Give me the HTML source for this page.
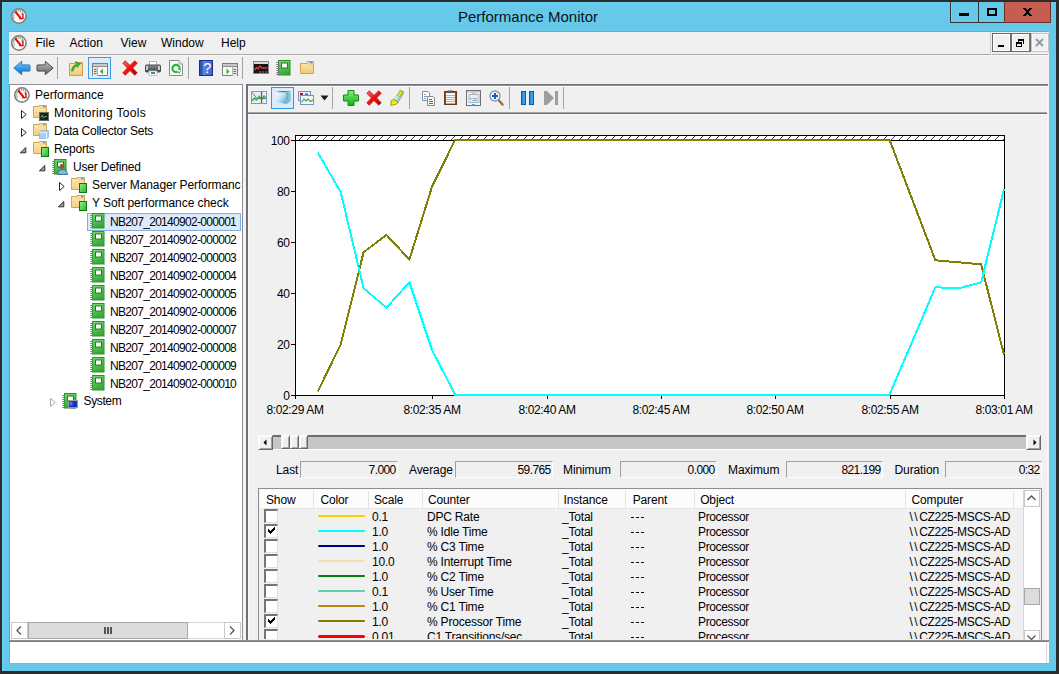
<!DOCTYPE html><html><head><meta charset="utf-8"><style>
html,body{margin:0;padding:0;}
body{width:1059px;height:674px;position:relative;overflow:hidden;background:#2d2b2b;font-family:"Liberation Sans", sans-serif;color:#000;}
div,svg{box-sizing:border-box;}
</style></head><body>
<div style="position:absolute;left:2px;top:2px;width:1054px;height:669px;background:#66c9e9;border-top:1px solid #66d3f6;border-left:1px solid #66d3f6;"></div>
<svg style="position:absolute;left:11px;top:8px;" width="16" height="16" viewBox="0 0 16 16"><circle cx="7.9" cy="8" r="7.2" fill="#fbfbfb" stroke="#7e7e7e" stroke-width="1.5"/>
<path d="M3.3 10.3 A5 5 0 0 1 12.2 5.2" fill="none" stroke="#5f8f72" stroke-width="1.6" stroke-dasharray="1 1"/>
<path d="M4.2 3.4 L9.6 10.2" stroke="#f00000" stroke-width="2"/>
<path d="M10.6 6.1 H11.9 V10.6 H8.2" fill="none" stroke="#e00000" stroke-width="1.4"/></svg>
<div style="position:absolute;left:458px;top:9.30px;font-size:15px;line-height:15px;white-space:pre;color:#0a1418;">Performance Monitor</div>
<div style="position:absolute;left:950px;top:2px;width:29px;height:21px;background:#66c9e9;border:1px solid #3a3434;border-top:none;"></div>
<div style="position:absolute;left:951px;top:2px;width:1px;height:20px;background:#6ad6f8;"></div>
<div style="position:absolute;left:959px;top:13px;width:10px;height:3px;background:#000;"></div>
<div style="position:absolute;left:978px;top:2px;width:27px;height:21px;background:#66c9e9;border:1px solid #3a3434;border-top:none;"></div>
<div style="position:absolute;left:987px;top:8px;width:10px;height:8px;border:2px solid #000;"></div>
<div style="position:absolute;left:1004px;top:2px;width:47px;height:21px;background:#c75c50;border:1px solid #6b2e2a;border-top:none;"></div>
<svg style="position:absolute;left:1023px;top:8px;" width="9" height="8" viewBox="0 0 9 8"><g fill="#000" shape-rendering="crispEdges"><rect x="0" y="0" width="3" height="1"/><rect x="6" y="0" width="3" height="1"/><rect x="1" y="1" width="3" height="1"/><rect x="5" y="1" width="3" height="1"/><rect x="2" y="2" width="5" height="1"/><rect x="3" y="3" width="3" height="1"/><rect x="3" y="4" width="3" height="1"/><rect x="2" y="5" width="5" height="1"/><rect x="1" y="6" width="3" height="1"/><rect x="5" y="6" width="3" height="1"/><rect x="0" y="7" width="3" height="1"/><rect x="6" y="7" width="3" height="1"/></g></svg>
<div style="position:absolute;left:9px;top:31px;width:1040px;height:633px;background:#f0f0f0;"></div>
<div style="position:absolute;left:9px;top:31px;width:1040px;height:1px;background:#5cb4d4;"></div>
<div style="position:absolute;left:9px;top:32px;width:981px;height:1px;background:#f6f3f3;"></div>
<svg style="position:absolute;left:11px;top:35px;" width="16" height="16" viewBox="0 0 16 16"><circle cx="7.9" cy="8" r="7.2" fill="#fbfbfb" stroke="#7e7e7e" stroke-width="1.5"/>
<path d="M3.3 10.3 A5 5 0 0 1 12.2 5.2" fill="none" stroke="#5f8f72" stroke-width="1.6" stroke-dasharray="1 1"/>
<path d="M4.2 3.4 L9.6 10.2" stroke="#f00000" stroke-width="2"/>
<path d="M10.6 6.1 H11.9 V10.6 H8.2" fill="none" stroke="#e00000" stroke-width="1.4"/></svg>
<div style="position:absolute;left:35.5px;top:36.84px;font-size:12px;line-height:12px;white-space:pre;">File</div>
<div style="position:absolute;left:69.5px;top:36.84px;font-size:12px;line-height:12px;white-space:pre;">Action</div>
<div style="position:absolute;left:120.5px;top:36.84px;font-size:12px;line-height:12px;white-space:pre;">View</div>
<div style="position:absolute;left:161px;top:36.84px;font-size:12px;line-height:12px;white-space:pre;">Window</div>
<div style="position:absolute;left:221px;top:36.84px;font-size:12px;line-height:12px;white-space:pre;">Help</div>
<div style="position:absolute;left:9px;top:54px;width:981px;height:1px;background:#a9a9a9;"></div>
<div style="position:absolute;left:9px;top:55px;width:1040px;height:1px;background:#f9f9fb;"></div>
<div style="position:absolute;left:990px;top:32px;width:1px;height:23px;background:#d0d0d0;"></div>
<div style="position:absolute;left:992px;top:33px;width:19px;height:19px;background:#f0f0f0;border:1px solid #6a6a6a;box-shadow:inset 0 0 0 1px #fff;"></div>
<div style="position:absolute;left:998px;top:45px;width:6px;height:2px;background:#000;"></div>
<div style="position:absolute;left:1011px;top:33px;width:20px;height:19px;background:#f0f0f0;border:1px solid #6a6a6a;box-shadow:inset 0 0 0 1px #fff;"></div>
<div style="position:absolute;left:1029px;top:34px;width:1px;height:17px;background:#7a7a7a;"></div>
<svg style="position:absolute;left:1016px;top:38px;" width="9" height="10" viewBox="0 0 9 10"><g fill="#000" shape-rendering="crispEdges"><rect x="2" y="1" width="6" height="2"/><rect x="7" y="3" width="1" height="3"/><rect x="2" y="3" width="1" height="1"/><rect x="0" y="4" width="6" height="2"/><rect x="0" y="6" width="1" height="3"/><rect x="5" y="6" width="1" height="3"/><rect x="0" y="8" width="6" height="1"/></g></svg>
<div style="position:absolute;left:1031px;top:33px;width:18px;height:19px;background:#f0f0f0;border:1px solid #c4c4c4;box-shadow:inset 0 0 0 1px #fafafa;"></div>
<svg style="position:absolute;left:1035px;top:38px;" width="9" height="9" viewBox="0 0 9 9"><path d="M1 1 L8 8 M8 1 L1 8" stroke="#8a9aae" stroke-width="1.8"/></svg>
<div style="position:absolute;left:992px;top:54px;width:56px;height:1px;background:#b0b0b0;"></div>
<svg style="position:absolute;left:13px;top:60px;" width="18" height="16" viewBox="0 0 18 16"><defs><linearGradient id="gb" x1="0" y1="0" x2="0" y2="1"><stop offset="0" stop-color="#7fd4fc"/><stop offset="0.55" stop-color="#2c98e8"/><stop offset="1" stop-color="#0e64c0"/></linearGradient></defs><path d="M0.8 8 L8.7 1.3 V4.9 H16.2 Q17 4.9 17 5.8 V10.2 Q17 11.1 16.2 11.1 H8.7 V14.7 Z" fill="url(#gb)" stroke="#2a7ac4" stroke-width="1" stroke-linejoin="round"/></svg>
<svg style="position:absolute;left:36px;top:60px;" width="18" height="16" viewBox="0 0 18 16"><defs><linearGradient id="gg" x1="0" y1="0" x2="0" y2="1"><stop offset="0" stop-color="#c4c4c4"/><stop offset="0.55" stop-color="#8a8a8a"/><stop offset="1" stop-color="#5e5e5e"/></linearGradient></defs><path d="M17.2 8 L9.3 1.3 V4.9 H1.8 Q1 4.9 1 5.8 V10.2 Q1 11.1 1.8 11.1 H9.3 V14.7 Z" fill="url(#gg)" stroke="#4e4e4e" stroke-width="1" stroke-linejoin="round"/></svg>
<div style="position:absolute;left:57px;top:57px;width:1px;height:22px;background:#a4a4a4;"></div>
<svg style="position:absolute;left:68px;top:60px;" width="16" height="17" viewBox="0 0 16 17"><defs><linearGradient id="gf" x1="0" y1="0" x2="0" y2="1"><stop offset="0" stop-color="#fde8b0"/><stop offset="1" stop-color="#eecb76"/></linearGradient></defs><path d="M1.5 3.5 H7 V2.5 H14.5 V15.5 H1.5 Z" fill="url(#gf)" stroke="#c9a050" stroke-width="1"/><rect x="11" y="3" width="2.6" height="1.2" fill="#4a90e0"/><path d="M3.5 11 Q4 5.5 8.5 4 L7.5 1.5 L12 3.8 L9.5 7.6 L9 5.6 Q6 7 5 11 Z" fill="#36c036" stroke="#1a9a1a" stroke-width="0.7"/></svg>
<div style="position:absolute;left:88px;top:57px;width:23px;height:22px;background:#dcecfc;border:1px solid #3a9ee4;"></div>
<svg style="position:absolute;left:92px;top:63px;" width="16" height="13" viewBox="0 0 16 13"><rect x="0.5" y="0.5" width="15" height="12" fill="#fafafa" stroke="#7e7e7e"/><rect x="1" y="1" width="14" height="2" fill="#c8c8c8"/><path d="M1 3.5 H15" stroke="#8e8e8e" stroke-width="1"/><path d="M5.5 4 V13" stroke="#8e8e8e" stroke-width="1"/><rect x="1" y="4" width="4.5" height="9" fill="#e4e4e4"/><path d="M2 6.5h2.5M2 8.5h2.5M2 10.5h2.5" stroke="#3a78c0" stroke-width="1.2"/><path d="M11 5.5 V11.5 L8 8.5 Z" fill="#38b038"/></svg>
<svg style="position:absolute;left:122px;top:60px;" width="16" height="16" viewBox="0 0 16 16"><defs><linearGradient id="g1" x1="0" y1="0" x2="1" y2="1"><stop offset="0" stop-color="#ff6a6a"/><stop offset="0.5" stop-color="#f01010"/><stop offset="1" stop-color="#b00000"/></linearGradient></defs>
<path d="M0.8 3.2 L3.2 0.8 L8 5.4 L12.8 0.8 L15.2 3.2 L10.6 8 L15.2 12.8 L12.8 15.2 L8 10.6 L3.2 15.2 L0.8 12.8 L5.4 8 Z" fill="url(#g1)" stroke="#c41414" stroke-width="0.8" stroke-linejoin="round"/></svg>
<svg style="position:absolute;left:145px;top:60px;" width="16" height="16" viewBox="0 0 16 16"><rect x="4.5" y="1.5" width="7" height="4" fill="#fff" stroke="#b4b4b4"/><defs><linearGradient id="gpr" x1="0" y1="0" x2="0" y2="1"><stop offset="0" stop-color="#8a8e92"/><stop offset="1" stop-color="#3c4044"/></linearGradient></defs><rect x="0.5" y="5" width="15" height="7" rx="1" fill="url(#gpr)" stroke="#4a4e52"/><rect x="1" y="6" width="2" height="4" fill="#c8ccd0"/><rect x="13" y="6" width="2" height="4" fill="#c8ccd0"/><rect x="4" y="11" width="8" height="4.5" fill="#fff" stroke="#a8b8c8" stroke-width="0.8"/><rect x="6" y="12" width="4" height="2" fill="#2a8ae0"/><rect x="8" y="12" width="2" height="2" fill="#30a040"/></svg>
<svg style="position:absolute;left:169px;top:60px;" width="15" height="16" viewBox="0 0 15 16"><path d="M0.5 0.5 H10 L13.5 4 V15.5 H0.5 Z" fill="#fafafa" stroke="#8a8a8a"/><path d="M10 0.5 V4 H13.5" fill="#e8e8e8" stroke="#a0a0a0" stroke-width="0.8"/><circle cx="7" cy="8.5" r="3.6" fill="none" stroke="#2cb82c" stroke-width="2.2"/><path d="M7.5 10 L12 9.5 L10.5 14 Z" fill="#2cb82c"/><rect x="8" y="10" width="3" height="1.5" fill="#fafafa"/></svg>
<div style="position:absolute;left:188px;top:57px;width:1px;height:22px;background:#a4a4a4;"></div>
<svg style="position:absolute;left:199px;top:60px;" width="15" height="16" viewBox="0 0 15 16"><defs><linearGradient id="gh" x1="0" y1="0" x2="1" y2="0"><stop offset="0" stop-color="#2a48a8"/><stop offset="0.25" stop-color="#3a60c8"/><stop offset="0.3" stop-color="#5a86e0"/><stop offset="1" stop-color="#3a66d0"/></linearGradient></defs><rect x="0.5" y="0.5" width="13" height="15" fill="url(#gh)" stroke="#1c3088"/><text x="8.2" y="13.2" font-family="Liberation Sans" font-size="14.5" fill="#fff" text-anchor="middle">?</text></svg>
<svg style="position:absolute;left:222px;top:63px;" width="16" height="13" viewBox="0 0 16 13"><rect x="0.5" y="0.5" width="15" height="12" fill="#fafafa" stroke="#7e7e7e"/><rect x="1" y="1" width="14" height="2" fill="#c8c8c8"/><path d="M1 3.5 H15" stroke="#8e8e8e" stroke-width="1"/><path d="M10.5 4 V13" stroke="#8e8e8e" stroke-width="1"/><rect x="10.5" y="4" width="4.5" height="9" fill="#e4e4e4"/><path d="M11.5 6.5h2.5M11.5 8.5h2.5M11.5 10.5h2.5" stroke="#3a78c0" stroke-width="1.2"/><path d="M4.5 5.5 V11.5 L7.5 8.5 Z" fill="#38b038"/></svg>
<div style="position:absolute;left:242px;top:57px;width:1px;height:22px;background:#a4a4a4;"></div>
<svg style="position:absolute;left:253px;top:61px;" width="16" height="13" viewBox="0 0 16 13"><rect x="0.5" y="0.5" width="15" height="12" fill="#141414" stroke="#8a8a8a"/><rect x="1" y="1" width="14" height="2" fill="#d8d8d8"/><path d="M1.5 9 L3.5 6.5 L5 8 L7 5 L9 7 H14.5" fill="none" stroke="#e83838" stroke-width="1.4"/><path d="M6 11h2M9 11h2M12 11h2" stroke="#9a9a9a" stroke-width="0.9"/></svg>
<svg style="position:absolute;left:276px;top:60px;" width="16" height="16" viewBox="0 0 16 16"><defs><linearGradient id="g2" x1="0" y1="0" x2="0.3" y2="1"><stop offset="0" stop-color="#78dc78"/><stop offset="1" stop-color="#38a838"/></linearGradient></defs>
<rect x="2.5" y="0.5" width="11.5" height="14.5" fill="url(#g2)" stroke="#2e902e" stroke-width="1"/>
<path d="M0.3 2.5h3M0.3 4.5h3M0.3 6.5h3M0.3 8.5h3M0.3 10.5h3M0.3 12.5h3M0.3 14.5h3" stroke="#7a7a7a" stroke-width="1.1"/>
<rect x="5.5" y="3" width="6" height="5" fill="#fff" stroke="#1e7e1e" stroke-width="1"/></svg>
<svg style="position:absolute;left:299px;top:60px;" width="16" height="15" viewBox="0 0 16 15"><defs><linearGradient id="gyf" x1="0" y1="0" x2="0" y2="1"><stop offset="0" stop-color="#fdeab8"/><stop offset="1" stop-color="#f0ca72"/></linearGradient></defs><path d="M1.5 3.5 H8 V1.5 H14.5 V13.5 H1.5 Z" fill="url(#gyf)" stroke="#cfa24e" stroke-width="1"/><path d="M8 4 H14" stroke="#e4c070" stroke-width="0.8"/><rect x="10.5" y="2" width="3" height="1.2" fill="#4a90e0"/></svg>
<div style="position:absolute;left:9px;top:84px;width:234px;height:557px;background:#fff;border:1px solid #8c9096;"></div>
<div style="position:absolute;left:87px;top:213px;width:154px;height:18px;background:#dcebfc;border:1px solid #84acdd;"></div>
<svg style="position:absolute;left:14px;top:87px;" width="16" height="16" viewBox="0 0 16 16"><circle cx="7.9" cy="8" r="7.2" fill="#fbfbfb" stroke="#7e7e7e" stroke-width="1.5"/>
<path d="M3.3 10.3 A5 5 0 0 1 12.2 5.2" fill="none" stroke="#5f8f72" stroke-width="1.6" stroke-dasharray="1 1"/>
<path d="M4.2 3.4 L9.6 10.2" stroke="#f00000" stroke-width="2"/>
<path d="M10.6 6.1 H11.9 V10.6 H8.2" fill="none" stroke="#e00000" stroke-width="1.4"/></svg>
<div style="position:absolute;left:35px;top:86.84px;font-size:12px;line-height:16px;height:18px;white-space:pre;width:206px;overflow:hidden;">Performance</div>
<svg style="position:absolute;left:21px;top:110px;" width="6" height="9" viewBox="0 0 6 9"><path d="M0.5 0.5 L5.2 4.5 L0.5 8.5 Z" fill="#fff" stroke="#262626" stroke-width="1"/></svg>
<svg style="position:absolute;left:33px;top:105px;" width="16" height="16" viewBox="0 0 16 16"><defs><linearGradient id="g3" x1="0" y1="0" x2="0" y2="1"><stop offset="0" stop-color="#fdeab8"/><stop offset="1" stop-color="#f2cf7c"/></linearGradient></defs>
<path d="M0.5 1.5 H6.2 V0.5 H13.5 V12.5 H0.5 Z" fill="url(#g3)" stroke="#d2a650" stroke-width="1"/>
<path d="M6.5 3 H13" stroke="#e8c678" stroke-width="0.8"/>
<rect x="10" y="1.1" width="2.6" height="1.2" fill="#4a90e0"/><rect x="6.5" y="7.5" width="9" height="8" fill="#202020" stroke="#6a6a6a" stroke-width="1"/><path d="M8 12.5 l1.3 -2.5 l1.3 3 l1.3 -1.5 h1.8" fill="none" stroke="#30d040" stroke-width="1"/></svg>
<div style="position:absolute;left:54px;top:104.84px;font-size:12px;line-height:16px;height:18px;white-space:pre;letter-spacing:0.3px;width:187px;overflow:hidden;">Monitoring Tools</div>
<svg style="position:absolute;left:21px;top:128px;" width="6" height="9" viewBox="0 0 6 9"><path d="M0.5 0.5 L5.2 4.5 L0.5 8.5 Z" fill="#fff" stroke="#262626" stroke-width="1"/></svg>
<svg style="position:absolute;left:33px;top:123px;" width="16" height="16" viewBox="0 0 16 16"><defs><linearGradient id="g4" x1="0" y1="0" x2="0" y2="1"><stop offset="0" stop-color="#fdeab8"/><stop offset="1" stop-color="#f2cf7c"/></linearGradient></defs>
<path d="M0.5 1.5 H6.2 V0.5 H13.5 V12.5 H0.5 Z" fill="url(#g4)" stroke="#d2a650" stroke-width="1"/>
<path d="M6.5 3 H13" stroke="#e8c678" stroke-width="0.8"/>
<rect x="10" y="1.1" width="2.6" height="1.2" fill="#4a90e0"/><path d="M6 9.5 L8.5 7.5 H15.8 V13.8 L13.5 16 H6.5 Z" fill="#a8d0ea" stroke="#7ab0d4" stroke-width="0.7"/><path d="M6.2 9.6 H13.5 V16" fill="none" stroke="#e6f4fc" stroke-width="0.9"/><path d="M13.5 9.6 L15.8 7.5" stroke="#d0e8f8" stroke-width="0.7"/></svg>
<div style="position:absolute;left:54px;top:122.84px;font-size:12px;line-height:16px;height:18px;white-space:pre;letter-spacing:-0.23px;width:187px;overflow:hidden;">Data Collector Sets</div>
<svg style="position:absolute;left:20px;top:147px;" width="7" height="7" viewBox="0 0 7 7"><path d="M5.8 0.5 V5.8 H0.4 Z" fill="#a0a0a0" stroke="#303030" stroke-width="1" stroke-linejoin="round"/></svg>
<svg style="position:absolute;left:33px;top:141px;" width="16" height="16" viewBox="0 0 16 16"><defs><linearGradient id="g5" x1="0" y1="0" x2="0" y2="1"><stop offset="0" stop-color="#fdeab8"/><stop offset="1" stop-color="#f2cf7c"/></linearGradient></defs>
<path d="M0.5 1.5 H6.2 V0.5 H13.5 V12.5 H0.5 Z" fill="url(#g5)" stroke="#d2a650" stroke-width="1"/>
<path d="M6.5 3 H13" stroke="#e8c678" stroke-width="0.8"/>
<rect x="10" y="1.1" width="2.6" height="1.2" fill="#4a90e0"/><defs><linearGradient id="g5b" x1="0" y1="0" x2="1" y2="1"><stop offset="0" stop-color="#8ef08e"/><stop offset="1" stop-color="#2cb42c"/></linearGradient></defs><rect x="8.5" y="6.5" width="7" height="9" fill="url(#g5b)" stroke="#0e780e" stroke-width="1"/></svg>
<div style="position:absolute;left:54px;top:140.84px;font-size:12px;line-height:16px;height:18px;white-space:pre;letter-spacing:-0.2px;width:187px;overflow:hidden;">Reports</div>
<svg style="position:absolute;left:39px;top:165px;" width="7" height="7" viewBox="0 0 7 7"><path d="M5.8 0.5 V5.8 H0.4 Z" fill="#a0a0a0" stroke="#303030" stroke-width="1" stroke-linejoin="round"/></svg>
<svg style="position:absolute;left:52px;top:159px;" width="16" height="16" viewBox="0 0 16 16"><defs><linearGradient id="g6" x1="0" y1="0" x2="0.3" y2="1"><stop offset="0" stop-color="#78dc78"/><stop offset="1" stop-color="#38a838"/></linearGradient></defs>
<rect x="2.5" y="0.5" width="11.5" height="14.5" fill="url(#g6)" stroke="#2e902e" stroke-width="1"/>
<path d="M0.3 2.5h3M0.3 4.5h3M0.3 6.5h3M0.3 8.5h3M0.3 10.5h3M0.3 12.5h3M0.3 14.5h3" stroke="#7a7a7a" stroke-width="1.1"/>
<rect x="5.5" y="3" width="6" height="5" fill="#fff" stroke="#1e7e1e" stroke-width="1"/><circle cx="10" cy="7.5" r="2.4" fill="#8a5a36"/><path d="M5.5 15.5 Q6 10.5 10.5 10.5 Q15 10.5 15.5 15.5 Z" fill="#80b8e0" stroke="#2e5e86" stroke-width="0.8"/></svg>
<div style="position:absolute;left:73px;top:158.84px;font-size:12px;line-height:16px;height:18px;white-space:pre;letter-spacing:-0.2px;width:168px;overflow:hidden;">User Defined</div>
<svg style="position:absolute;left:59px;top:182px;" width="6" height="9" viewBox="0 0 6 9"><path d="M0.5 0.5 L5.2 4.5 L0.5 8.5 Z" fill="#fff" stroke="#262626" stroke-width="1"/></svg>
<svg style="position:absolute;left:71px;top:177px;" width="16" height="16" viewBox="0 0 16 16"><defs><linearGradient id="g7" x1="0" y1="0" x2="0" y2="1"><stop offset="0" stop-color="#fdeab8"/><stop offset="1" stop-color="#f2cf7c"/></linearGradient></defs>
<path d="M0.5 1.5 H6.2 V0.5 H13.5 V12.5 H0.5 Z" fill="url(#g7)" stroke="#d2a650" stroke-width="1"/>
<path d="M6.5 3 H13" stroke="#e8c678" stroke-width="0.8"/>
<rect x="10" y="1.1" width="2.6" height="1.2" fill="#4a90e0"/><defs><linearGradient id="g7b" x1="0" y1="0" x2="1" y2="1"><stop offset="0" stop-color="#8ef08e"/><stop offset="1" stop-color="#2cb42c"/></linearGradient></defs><rect x="8.5" y="6.5" width="7" height="9" fill="url(#g7b)" stroke="#0e780e" stroke-width="1"/></svg>
<div style="position:absolute;left:92px;top:176.84px;font-size:12px;line-height:16px;height:18px;white-space:pre;letter-spacing:-0.12px;width:149px;overflow:hidden;">Server Manager Performance Monitor</div>
<svg style="position:absolute;left:58px;top:201px;" width="7" height="7" viewBox="0 0 7 7"><path d="M5.8 0.5 V5.8 H0.4 Z" fill="#a0a0a0" stroke="#303030" stroke-width="1" stroke-linejoin="round"/></svg>
<svg style="position:absolute;left:71px;top:195px;" width="16" height="16" viewBox="0 0 16 16"><defs><linearGradient id="g8" x1="0" y1="0" x2="0" y2="1"><stop offset="0" stop-color="#fdeab8"/><stop offset="1" stop-color="#f2cf7c"/></linearGradient></defs>
<path d="M0.5 1.5 H6.2 V0.5 H13.5 V12.5 H0.5 Z" fill="url(#g8)" stroke="#d2a650" stroke-width="1"/>
<path d="M6.5 3 H13" stroke="#e8c678" stroke-width="0.8"/>
<rect x="10" y="1.1" width="2.6" height="1.2" fill="#4a90e0"/><defs><linearGradient id="g8b" x1="0" y1="0" x2="1" y2="1"><stop offset="0" stop-color="#8ef08e"/><stop offset="1" stop-color="#2cb42c"/></linearGradient></defs><rect x="8.5" y="6.5" width="7" height="9" fill="url(#g8b)" stroke="#0e780e" stroke-width="1"/></svg>
<div style="position:absolute;left:92px;top:194.84px;font-size:12px;line-height:16px;height:18px;white-space:pre;letter-spacing:-0.05px;width:149px;overflow:hidden;">Y Soft performance check</div>
<svg style="position:absolute;left:90px;top:213px;" width="16" height="16" viewBox="0 0 16 16"><defs><linearGradient id="g9" x1="0" y1="0" x2="0.3" y2="1"><stop offset="0" stop-color="#78dc78"/><stop offset="1" stop-color="#38a838"/></linearGradient></defs>
<rect x="2.5" y="0.5" width="11.5" height="14.5" fill="url(#g9)" stroke="#2e902e" stroke-width="1"/>
<path d="M0.3 2.5h3M0.3 4.5h3M0.3 6.5h3M0.3 8.5h3M0.3 10.5h3M0.3 12.5h3M0.3 14.5h3" stroke="#7a7a7a" stroke-width="1.1"/>
<rect x="5.5" y="3" width="6" height="5" fill="#fff" stroke="#1e7e1e" stroke-width="1"/></svg>
<div style="position:absolute;left:110px;top:213.84px;font-size:12px;line-height:16px;height:18px;white-space:pre;letter-spacing:-0.7px;width:131px;overflow:hidden;">NB207_20140902-000001</div>
<svg style="position:absolute;left:90px;top:231px;" width="16" height="16" viewBox="0 0 16 16"><defs><linearGradient id="g10" x1="0" y1="0" x2="0.3" y2="1"><stop offset="0" stop-color="#78dc78"/><stop offset="1" stop-color="#38a838"/></linearGradient></defs>
<rect x="2.5" y="0.5" width="11.5" height="14.5" fill="url(#g10)" stroke="#2e902e" stroke-width="1"/>
<path d="M0.3 2.5h3M0.3 4.5h3M0.3 6.5h3M0.3 8.5h3M0.3 10.5h3M0.3 12.5h3M0.3 14.5h3" stroke="#7a7a7a" stroke-width="1.1"/>
<rect x="5.5" y="3" width="6" height="5" fill="#fff" stroke="#1e7e1e" stroke-width="1"/></svg>
<div style="position:absolute;left:110px;top:231.84px;font-size:12px;line-height:16px;height:18px;white-space:pre;letter-spacing:-0.7px;width:131px;overflow:hidden;">NB207_20140902-000002</div>
<svg style="position:absolute;left:90px;top:249px;" width="16" height="16" viewBox="0 0 16 16"><defs><linearGradient id="g11" x1="0" y1="0" x2="0.3" y2="1"><stop offset="0" stop-color="#78dc78"/><stop offset="1" stop-color="#38a838"/></linearGradient></defs>
<rect x="2.5" y="0.5" width="11.5" height="14.5" fill="url(#g11)" stroke="#2e902e" stroke-width="1"/>
<path d="M0.3 2.5h3M0.3 4.5h3M0.3 6.5h3M0.3 8.5h3M0.3 10.5h3M0.3 12.5h3M0.3 14.5h3" stroke="#7a7a7a" stroke-width="1.1"/>
<rect x="5.5" y="3" width="6" height="5" fill="#fff" stroke="#1e7e1e" stroke-width="1"/></svg>
<div style="position:absolute;left:110px;top:249.84px;font-size:12px;line-height:16px;height:18px;white-space:pre;letter-spacing:-0.7px;width:131px;overflow:hidden;">NB207_20140902-000003</div>
<svg style="position:absolute;left:90px;top:267px;" width="16" height="16" viewBox="0 0 16 16"><defs><linearGradient id="g12" x1="0" y1="0" x2="0.3" y2="1"><stop offset="0" stop-color="#78dc78"/><stop offset="1" stop-color="#38a838"/></linearGradient></defs>
<rect x="2.5" y="0.5" width="11.5" height="14.5" fill="url(#g12)" stroke="#2e902e" stroke-width="1"/>
<path d="M0.3 2.5h3M0.3 4.5h3M0.3 6.5h3M0.3 8.5h3M0.3 10.5h3M0.3 12.5h3M0.3 14.5h3" stroke="#7a7a7a" stroke-width="1.1"/>
<rect x="5.5" y="3" width="6" height="5" fill="#fff" stroke="#1e7e1e" stroke-width="1"/></svg>
<div style="position:absolute;left:110px;top:267.84px;font-size:12px;line-height:16px;height:18px;white-space:pre;letter-spacing:-0.7px;width:131px;overflow:hidden;">NB207_20140902-000004</div>
<svg style="position:absolute;left:90px;top:285px;" width="16" height="16" viewBox="0 0 16 16"><defs><linearGradient id="g13" x1="0" y1="0" x2="0.3" y2="1"><stop offset="0" stop-color="#78dc78"/><stop offset="1" stop-color="#38a838"/></linearGradient></defs>
<rect x="2.5" y="0.5" width="11.5" height="14.5" fill="url(#g13)" stroke="#2e902e" stroke-width="1"/>
<path d="M0.3 2.5h3M0.3 4.5h3M0.3 6.5h3M0.3 8.5h3M0.3 10.5h3M0.3 12.5h3M0.3 14.5h3" stroke="#7a7a7a" stroke-width="1.1"/>
<rect x="5.5" y="3" width="6" height="5" fill="#fff" stroke="#1e7e1e" stroke-width="1"/></svg>
<div style="position:absolute;left:110px;top:285.84px;font-size:12px;line-height:16px;height:18px;white-space:pre;letter-spacing:-0.7px;width:131px;overflow:hidden;">NB207_20140902-000005</div>
<svg style="position:absolute;left:90px;top:303px;" width="16" height="16" viewBox="0 0 16 16"><defs><linearGradient id="g14" x1="0" y1="0" x2="0.3" y2="1"><stop offset="0" stop-color="#78dc78"/><stop offset="1" stop-color="#38a838"/></linearGradient></defs>
<rect x="2.5" y="0.5" width="11.5" height="14.5" fill="url(#g14)" stroke="#2e902e" stroke-width="1"/>
<path d="M0.3 2.5h3M0.3 4.5h3M0.3 6.5h3M0.3 8.5h3M0.3 10.5h3M0.3 12.5h3M0.3 14.5h3" stroke="#7a7a7a" stroke-width="1.1"/>
<rect x="5.5" y="3" width="6" height="5" fill="#fff" stroke="#1e7e1e" stroke-width="1"/></svg>
<div style="position:absolute;left:110px;top:303.84px;font-size:12px;line-height:16px;height:18px;white-space:pre;letter-spacing:-0.7px;width:131px;overflow:hidden;">NB207_20140902-000006</div>
<svg style="position:absolute;left:90px;top:321px;" width="16" height="16" viewBox="0 0 16 16"><defs><linearGradient id="g15" x1="0" y1="0" x2="0.3" y2="1"><stop offset="0" stop-color="#78dc78"/><stop offset="1" stop-color="#38a838"/></linearGradient></defs>
<rect x="2.5" y="0.5" width="11.5" height="14.5" fill="url(#g15)" stroke="#2e902e" stroke-width="1"/>
<path d="M0.3 2.5h3M0.3 4.5h3M0.3 6.5h3M0.3 8.5h3M0.3 10.5h3M0.3 12.5h3M0.3 14.5h3" stroke="#7a7a7a" stroke-width="1.1"/>
<rect x="5.5" y="3" width="6" height="5" fill="#fff" stroke="#1e7e1e" stroke-width="1"/></svg>
<div style="position:absolute;left:110px;top:321.84px;font-size:12px;line-height:16px;height:18px;white-space:pre;letter-spacing:-0.7px;width:131px;overflow:hidden;">NB207_20140902-000007</div>
<svg style="position:absolute;left:90px;top:339px;" width="16" height="16" viewBox="0 0 16 16"><defs><linearGradient id="g16" x1="0" y1="0" x2="0.3" y2="1"><stop offset="0" stop-color="#78dc78"/><stop offset="1" stop-color="#38a838"/></linearGradient></defs>
<rect x="2.5" y="0.5" width="11.5" height="14.5" fill="url(#g16)" stroke="#2e902e" stroke-width="1"/>
<path d="M0.3 2.5h3M0.3 4.5h3M0.3 6.5h3M0.3 8.5h3M0.3 10.5h3M0.3 12.5h3M0.3 14.5h3" stroke="#7a7a7a" stroke-width="1.1"/>
<rect x="5.5" y="3" width="6" height="5" fill="#fff" stroke="#1e7e1e" stroke-width="1"/></svg>
<div style="position:absolute;left:110px;top:339.84px;font-size:12px;line-height:16px;height:18px;white-space:pre;letter-spacing:-0.7px;width:131px;overflow:hidden;">NB207_20140902-000008</div>
<svg style="position:absolute;left:90px;top:357px;" width="16" height="16" viewBox="0 0 16 16"><defs><linearGradient id="g17" x1="0" y1="0" x2="0.3" y2="1"><stop offset="0" stop-color="#78dc78"/><stop offset="1" stop-color="#38a838"/></linearGradient></defs>
<rect x="2.5" y="0.5" width="11.5" height="14.5" fill="url(#g17)" stroke="#2e902e" stroke-width="1"/>
<path d="M0.3 2.5h3M0.3 4.5h3M0.3 6.5h3M0.3 8.5h3M0.3 10.5h3M0.3 12.5h3M0.3 14.5h3" stroke="#7a7a7a" stroke-width="1.1"/>
<rect x="5.5" y="3" width="6" height="5" fill="#fff" stroke="#1e7e1e" stroke-width="1"/></svg>
<div style="position:absolute;left:110px;top:357.84px;font-size:12px;line-height:16px;height:18px;white-space:pre;letter-spacing:-0.7px;width:131px;overflow:hidden;">NB207_20140902-000009</div>
<svg style="position:absolute;left:90px;top:375px;" width="16" height="16" viewBox="0 0 16 16"><defs><linearGradient id="g18" x1="0" y1="0" x2="0.3" y2="1"><stop offset="0" stop-color="#78dc78"/><stop offset="1" stop-color="#38a838"/></linearGradient></defs>
<rect x="2.5" y="0.5" width="11.5" height="14.5" fill="url(#g18)" stroke="#2e902e" stroke-width="1"/>
<path d="M0.3 2.5h3M0.3 4.5h3M0.3 6.5h3M0.3 8.5h3M0.3 10.5h3M0.3 12.5h3M0.3 14.5h3" stroke="#7a7a7a" stroke-width="1.1"/>
<rect x="5.5" y="3" width="6" height="5" fill="#fff" stroke="#1e7e1e" stroke-width="1"/></svg>
<div style="position:absolute;left:110px;top:375.84px;font-size:12px;line-height:16px;height:18px;white-space:pre;letter-spacing:-0.7px;width:131px;overflow:hidden;">NB207_20140902-000010</div>
<svg style="position:absolute;left:50px;top:398px;" width="6" height="9" viewBox="0 0 6 9"><path d="M0.5 0.5 L5.2 4.5 L0.5 8.5 Z" fill="#fff" stroke="#a8a8a8" stroke-width="1"/></svg>
<svg style="position:absolute;left:62px;top:393px;" width="16" height="16" viewBox="0 0 16 16"><defs><linearGradient id="g19" x1="0" y1="0" x2="0.3" y2="1"><stop offset="0" stop-color="#78dc78"/><stop offset="1" stop-color="#38a838"/></linearGradient></defs>
<rect x="2.5" y="0.5" width="11.5" height="14.5" fill="url(#g19)" stroke="#2e902e" stroke-width="1"/>
<path d="M0.3 2.5h3M0.3 4.5h3M0.3 6.5h3M0.3 8.5h3M0.3 10.5h3M0.3 12.5h3M0.3 14.5h3" stroke="#7a7a7a" stroke-width="1.1"/>
<rect x="5.5" y="3" width="6" height="5" fill="#fff" stroke="#1e7e1e" stroke-width="1"/><rect x="6.5" y="7.5" width="9" height="7" fill="#1630c8" stroke="#9a9a9a" stroke-width="1"/><rect x="7.5" y="8.5" width="3" height="4" fill="#4a70f0"/><rect x="9" y="14.5" width="4" height="1.5" fill="#909090"/></svg>
<div style="position:absolute;left:83.5px;top:392.84px;font-size:12px;line-height:16px;height:18px;white-space:pre;letter-spacing:-0.37px;width:157.5px;overflow:hidden;">System</div>
<div style="position:absolute;left:11px;top:622px;width:230px;height:17px;background:#fff;border:1px solid #d6d6d6;"></div>
<div style="position:absolute;left:11px;top:622px;width:17px;height:17px;background:#fff;border:1px solid #c8c8c8;"></div>
<svg style="position:absolute;left:16px;top:626px;" width="6" height="9" viewBox="0 0 6 9"><path d="M5 0.5 L1 4.5 L5 8.5" fill="none" stroke="#555" stroke-width="1.3"/></svg>
<div style="position:absolute;left:28px;top:622px;width:160px;height:17px;background:#dcdcdc;border:1px solid #a8a8a8;"></div>
<div style="position:absolute;left:104px;top:627px;width:2px;height:7px;background:#555;"></div>
<div style="position:absolute;left:107px;top:627px;width:2px;height:7px;background:#555;"></div>
<div style="position:absolute;left:110px;top:627px;width:2px;height:7px;background:#555;"></div>
<div style="position:absolute;left:224px;top:622px;width:17px;height:17px;background:#fff;border:1px solid #c8c8c8;"></div>
<svg style="position:absolute;left:229px;top:626px;" width="6" height="9" viewBox="0 0 6 9"><path d="M1 0.5 L5 4.5 L1 8.5" fill="none" stroke="#555" stroke-width="1.3"/></svg>
<div style="position:absolute;left:243px;top:84px;width:3px;height:557px;background:#f4f4f4;"></div>
<div style="position:absolute;left:246px;top:84px;width:802px;height:558px;background:#f0f0f0;border-left:2px solid #6e7278;border-top:1px solid #70747a;border-bottom:2px solid #6e7278;"></div>
<div style="position:absolute;left:248px;top:85px;width:800px;height:1px;background:#8c9096;"></div>
<div style="position:absolute;left:248px;top:86px;width:799px;height:1px;background:#fff;"></div>
<div style="position:absolute;left:248px;top:86px;width:1px;height:554px;background:#fafafa;"></div>
<div style="position:absolute;left:1047px;top:86px;width:1px;height:554px;background:#fafafa;"></div>
<div style="position:absolute;left:248px;top:112px;width:799px;height:1px;background:#a4a8ac;"></div>
<div style="position:absolute;left:248px;top:113px;width:799px;height:1px;background:#6a6e74;"></div>
<div style="position:absolute;left:248px;top:114px;width:799px;height:1px;background:#fafafa;"></div>
<svg style="position:absolute;left:251px;top:91px;" width="16" height="13" viewBox="0 0 16 13"><rect x="0.5" y="0.5" width="15" height="12" fill="#eaf2fa" stroke="#7c9ad0"/><path d="M4 1v11M8 1v11M12 1v11M1 4h14M1 8h14" stroke="#d8e4f0" stroke-width="0.8"/><path d="M1 1.5 L6 7.5 H15" fill="none" stroke="#5a78c8" stroke-width="1"/><path d="M1 10 L3.5 7 L5.5 9 L8 5.5 L11 8 L13 5 L15 7" fill="none" stroke="#30b030" stroke-width="1.4"/><path d="M10.5 1 V12" stroke="#e82020" stroke-width="1.2"/></svg>
<div style="position:absolute;left:271px;top:87px;width:23px;height:22px;background:#dcecfc;border:1px solid #2e9ae2;"></div>
<svg style="position:absolute;left:275px;top:90px;" width="17" height="15" viewBox="0 0 17 15"><defs><linearGradient id="gcf" x1="0" y1="0" x2="1" y2="1"><stop offset="0" stop-color="#ffffff"/><stop offset="0.45" stop-color="#c8e4f0"/><stop offset="1" stop-color="#4aa6c4"/></linearGradient><linearGradient id="gcs" x1="0" y1="0" x2="1" y2="0"><stop offset="0" stop-color="#58a8c4"/><stop offset="1" stop-color="#9ad4e4"/></linearGradient><linearGradient id="gct" x1="0" y1="0" x2="1" y2="0"><stop offset="0" stop-color="#8ec4d8"/><stop offset="0.5" stop-color="#3a7890"/><stop offset="1" stop-color="#8ec4d8"/></linearGradient></defs><path d="M1 2.5 L3 1 H16 L14.5 2.5 Z" fill="url(#gct)"/><path d="M10.5 2.5 H16 V11.5 L11.5 14 Z" fill="url(#gcs)"/><path d="M1 2.5 H10.5 L11.5 14 L1.5 12 Z" fill="url(#gcf)"/></svg>
<svg style="position:absolute;left:298px;top:91px;" width="16" height="14" viewBox="0 0 16 14"><rect x="0.5" y="0.5" width="12" height="9" fill="#e6eef8" stroke="#7a90c0"/><rect x="2" y="2" width="3" height="2" fill="#b01818"/><rect x="7" y="2.5" width="3" height="1.5" fill="#3a60d0"/><rect x="2.5" y="4.5" width="13" height="9" fill="#eef4fa" stroke="#7a90c0"/><path d="M3.5 11.5 L6 8 L8 10 L10 8 L12.5 10.5 L15 9" fill="none" stroke="#38b038" stroke-width="1.1"/></svg>
<svg style="position:absolute;left:320px;top:95px;" width="9" height="6" viewBox="0 0 9 6"><path d="M0.5 0.5 h8 l-4 5z" fill="#1a1a1a"/></svg>
<div style="position:absolute;left:332px;top:87px;width:1px;height:22px;background:#a4a4a4;"></div>
<svg style="position:absolute;left:343px;top:90px;" width="16" height="16" viewBox="0 0 16 16"><defs><linearGradient id="gpl" x1="0" y1="0" x2="0" y2="1"><stop offset="0" stop-color="#7ef07e"/><stop offset="1" stop-color="#18b018"/></linearGradient></defs><path d="M5 0.5 H11 V5 H15.5 V11 H11 V15.5 H5 V11 H0.5 V5 H5 Z" fill="url(#gpl)" stroke="#0a900a" stroke-width="1"/></svg>
<svg style="position:absolute;left:366px;top:90px;" width="16" height="16" viewBox="0 0 16 16"><defs><linearGradient id="g20" x1="0" y1="0" x2="1" y2="1"><stop offset="0" stop-color="#ff6a6a"/><stop offset="0.5" stop-color="#f01010"/><stop offset="1" stop-color="#b00000"/></linearGradient></defs>
<path d="M0.8 3.2 L3.2 0.8 L8 5.4 L12.8 0.8 L15.2 3.2 L10.6 8 L15.2 12.8 L12.8 15.2 L8 10.6 L3.2 15.2 L0.8 12.8 L5.4 8 Z" fill="url(#g20)" stroke="#c41414" stroke-width="0.8" stroke-linejoin="round"/></svg>
<svg style="position:absolute;left:390px;top:89px;" width="14" height="17" viewBox="0 0 14 17"><path d="M4 11 L10.3 1 L14 3.3 L7.8 13.5 Z" fill="#a8d4dc" stroke="#5e9096" stroke-width="0.8"/><path d="M10.3 1 L11.5 1.7 L5.5 12 L4 11 Z" fill="#d8f0f4"/><path d="M7.6 6.6 L10.6 1.8 L12.6 3 L9.6 8 Z" fill="#ecec10" stroke="#9a9a00" stroke-width="0.6"/><path d="M0.8 16.5 L1.2 11.5 L4 10.5 L8 13 L6.8 15 Z" fill="#f0f010" stroke="#8a8a00" stroke-width="0.8"/></svg>
<div style="position:absolute;left:409px;top:87px;width:1px;height:22px;background:#a4a4a4;"></div>
<svg style="position:absolute;left:422px;top:91px;" width="14" height="15" viewBox="0 0 14 15"><path d="M0.5 0.5 H6 L7.5 2 V9.5 H0.5 Z" fill="#fff" stroke="#8a8a8a"/><path d="M2 3.5h2M2 5.5h3M2 7.5h2" stroke="#6a9ad8" stroke-width="1"/><path d="M5.5 5.5 H11 L12.5 7 V14.5 H5.5 Z" fill="#fff" stroke="#8a8a8a"/><path d="M7 8.5h3M7 10.5h4M7 12.5h4" stroke="#2a6ac8" stroke-width="1"/></svg>
<svg style="position:absolute;left:444px;top:90px;" width="14" height="15" viewBox="0 0 14 15"><rect x="0.5" y="1.5" width="12" height="13" fill="#8a5424" stroke="#6a3a14"/><rect x="2" y="3" width="9" height="10.5" fill="#fafafa"/><rect x="3.5" y="0.5" width="6" height="2.5" fill="#5a5a5a"/><path d="M2 5.5h9M2 7.5h9M2 9.5h9M2 11.5h9" stroke="#9ab8dc" stroke-width="1"/></svg>
<svg style="position:absolute;left:466px;top:90px;" width="15" height="16" viewBox="0 0 15 16"><rect x="0.5" y="0.5" width="14" height="15" fill="#f4f4f4" stroke="#6e6e6e"/><rect x="1" y="1" width="13" height="1.5" fill="#c0c8d0"/><rect x="3" y="4.5" width="10" height="8" fill="#e8ecf0" stroke="#a0a8b0" stroke-width="0.8"/><path d="M6.5 4.5 v-1.5 h3 v1.5" fill="none" stroke="#a0a8b0" stroke-width="0.8"/><rect x="4" y="8" width="1.3" height="1.3" fill="#30a0e8"/><path d="M6.5 8.7h5M6.5 10.7h5" stroke="#8a8a8a" stroke-width="0.8"/><rect x="6" y="14" width="3" height="1.5" fill="#30a8f0"/></svg>
<svg style="position:absolute;left:489px;top:90px;" width="15" height="16" viewBox="0 0 15 16"><path d="M9.5 10 L13.5 14.5" stroke="#9a6a3a" stroke-width="2.4" stroke-linecap="round"/><circle cx="6" cy="6" r="5" fill="#f4f8fc" stroke="#8a9aaa" stroke-width="1.4"/><path d="M6 3 V9 M3 6 H9" stroke="#1a5ad0" stroke-width="2"/></svg>
<div style="position:absolute;left:509px;top:87px;width:1px;height:22px;background:#a4a4a4;"></div>
<svg style="position:absolute;left:520px;top:90px;" width="15" height="16" viewBox="0 0 15 16"><defs><linearGradient id="gpa" x1="0" y1="0" x2="1" y2="0"><stop offset="0" stop-color="#1a6ac8"/><stop offset="0.6" stop-color="#40b0f0"/><stop offset="1" stop-color="#2080d8"/></linearGradient></defs><rect x="1.5" y="1.5" width="4" height="13" fill="url(#gpa)" stroke="#0c58b0"/><rect x="9.5" y="1.5" width="4" height="13" fill="url(#gpa)" stroke="#0c58b0"/></svg>
<svg style="position:absolute;left:544px;top:91px;" width="15" height="14" viewBox="0 0 15 14"><path d="M0 0 H3 L10 7 L3 14 H0 Z" fill="#9e9e9e"/><rect x="11" y="0" width="3" height="14" fill="#9e9e9e"/></svg>
<div style="position:absolute;left:563px;top:87px;width:1px;height:22px;background:#a4a4a4;"></div>
<div style="position:absolute;left:295px;top:135px;width:710px;height:261px;background:#fff;border:1px solid #000;border-right:none;"></div>
<svg style="position:absolute;left:296px;top:136px;" width="708" height="4" viewBox="0 0 708 4"><path d="M3 4 L7 0" stroke="#000" stroke-width="0.75"/><path d="M11 4 L15 0" stroke="#000" stroke-width="0.75"/><path d="M19 4 L23 0" stroke="#000" stroke-width="0.75"/><path d="M27 4 L31 0" stroke="#000" stroke-width="0.75"/><path d="M35 4 L39 0" stroke="#000" stroke-width="0.75"/><path d="M43 4 L47 0" stroke="#000" stroke-width="0.75"/><path d="M51 4 L55 0" stroke="#000" stroke-width="0.75"/><path d="M59 4 L63 0" stroke="#000" stroke-width="0.75"/><path d="M67 4 L71 0" stroke="#000" stroke-width="0.75"/><path d="M75 4 L79 0" stroke="#000" stroke-width="0.75"/><path d="M83 4 L87 0" stroke="#000" stroke-width="0.75"/><path d="M91 4 L95 0" stroke="#000" stroke-width="0.75"/><path d="M99 4 L103 0" stroke="#000" stroke-width="0.75"/><path d="M107 4 L111 0" stroke="#000" stroke-width="0.75"/><path d="M115 4 L119 0" stroke="#000" stroke-width="0.75"/><path d="M123 4 L127 0" stroke="#000" stroke-width="0.75"/><path d="M131 4 L135 0" stroke="#000" stroke-width="0.75"/><path d="M139 4 L143 0" stroke="#000" stroke-width="0.75"/><path d="M147 4 L151 0" stroke="#000" stroke-width="0.75"/><path d="M155 4 L159 0" stroke="#000" stroke-width="0.75"/><path d="M163 4 L167 0" stroke="#000" stroke-width="0.75"/><path d="M171 4 L175 0" stroke="#000" stroke-width="0.75"/><path d="M179 4 L183 0" stroke="#000" stroke-width="0.75"/><path d="M187 4 L191 0" stroke="#000" stroke-width="0.75"/><path d="M195 4 L199 0" stroke="#000" stroke-width="0.75"/><path d="M203 4 L207 0" stroke="#000" stroke-width="0.75"/><path d="M211 4 L215 0" stroke="#000" stroke-width="0.75"/><path d="M219 4 L223 0" stroke="#000" stroke-width="0.75"/><path d="M227 4 L231 0" stroke="#000" stroke-width="0.75"/><path d="M235 4 L239 0" stroke="#000" stroke-width="0.75"/><path d="M243 4 L247 0" stroke="#000" stroke-width="0.75"/><path d="M251 4 L255 0" stroke="#000" stroke-width="0.75"/><path d="M259 4 L263 0" stroke="#000" stroke-width="0.75"/><path d="M267 4 L271 0" stroke="#000" stroke-width="0.75"/><path d="M275 4 L279 0" stroke="#000" stroke-width="0.75"/><path d="M283 4 L287 0" stroke="#000" stroke-width="0.75"/><path d="M291 4 L295 0" stroke="#000" stroke-width="0.75"/><path d="M299 4 L303 0" stroke="#000" stroke-width="0.75"/><path d="M307 4 L311 0" stroke="#000" stroke-width="0.75"/><path d="M315 4 L319 0" stroke="#000" stroke-width="0.75"/><path d="M323 4 L327 0" stroke="#000" stroke-width="0.75"/><path d="M331 4 L335 0" stroke="#000" stroke-width="0.75"/><path d="M339 4 L343 0" stroke="#000" stroke-width="0.75"/><path d="M347 4 L351 0" stroke="#000" stroke-width="0.75"/><path d="M355 4 L359 0" stroke="#000" stroke-width="0.75"/><path d="M363 4 L367 0" stroke="#000" stroke-width="0.75"/><path d="M371 4 L375 0" stroke="#000" stroke-width="0.75"/><path d="M379 4 L383 0" stroke="#000" stroke-width="0.75"/><path d="M387 4 L391 0" stroke="#000" stroke-width="0.75"/><path d="M395 4 L399 0" stroke="#000" stroke-width="0.75"/><path d="M403 4 L407 0" stroke="#000" stroke-width="0.75"/><path d="M411 4 L415 0" stroke="#000" stroke-width="0.75"/><path d="M419 4 L423 0" stroke="#000" stroke-width="0.75"/><path d="M427 4 L431 0" stroke="#000" stroke-width="0.75"/><path d="M435 4 L439 0" stroke="#000" stroke-width="0.75"/><path d="M443 4 L447 0" stroke="#000" stroke-width="0.75"/><path d="M451 4 L455 0" stroke="#000" stroke-width="0.75"/><path d="M459 4 L463 0" stroke="#000" stroke-width="0.75"/><path d="M467 4 L471 0" stroke="#000" stroke-width="0.75"/><path d="M475 4 L479 0" stroke="#000" stroke-width="0.75"/><path d="M483 4 L487 0" stroke="#000" stroke-width="0.75"/><path d="M491 4 L495 0" stroke="#000" stroke-width="0.75"/><path d="M499 4 L503 0" stroke="#000" stroke-width="0.75"/><path d="M507 4 L511 0" stroke="#000" stroke-width="0.75"/><path d="M515 4 L519 0" stroke="#000" stroke-width="0.75"/><path d="M523 4 L527 0" stroke="#000" stroke-width="0.75"/><path d="M531 4 L535 0" stroke="#000" stroke-width="0.75"/><path d="M539 4 L543 0" stroke="#000" stroke-width="0.75"/><path d="M547 4 L551 0" stroke="#000" stroke-width="0.75"/><path d="M555 4 L559 0" stroke="#000" stroke-width="0.75"/><path d="M563 4 L567 0" stroke="#000" stroke-width="0.75"/><path d="M571 4 L575 0" stroke="#000" stroke-width="0.75"/><path d="M579 4 L583 0" stroke="#000" stroke-width="0.75"/><path d="M587 4 L591 0" stroke="#000" stroke-width="0.75"/><path d="M595 4 L599 0" stroke="#000" stroke-width="0.75"/><path d="M603 4 L607 0" stroke="#000" stroke-width="0.75"/><path d="M611 4 L615 0" stroke="#000" stroke-width="0.75"/><path d="M619 4 L623 0" stroke="#000" stroke-width="0.75"/><path d="M627 4 L631 0" stroke="#000" stroke-width="0.75"/><path d="M635 4 L639 0" stroke="#000" stroke-width="0.75"/><path d="M643 4 L647 0" stroke="#000" stroke-width="0.75"/><path d="M651 4 L655 0" stroke="#000" stroke-width="0.75"/><path d="M659 4 L663 0" stroke="#000" stroke-width="0.75"/><path d="M667 4 L671 0" stroke="#000" stroke-width="0.75"/><path d="M675 4 L679 0" stroke="#000" stroke-width="0.75"/><path d="M683 4 L687 0" stroke="#000" stroke-width="0.75"/><path d="M691 4 L695 0" stroke="#000" stroke-width="0.75"/><path d="M699 4 L703 0" stroke="#000" stroke-width="0.75"/><path d="M707 4 L711 0" stroke="#000" stroke-width="0.75"/></svg>
<div style="position:absolute;left:295px;top:140px;width:710px;height:1px;background:#000;"></div>
<div style="position:absolute;left:1004px;top:135px;width:1px;height:261px;background:#000;"></div>
<div style="position:absolute;left:295px;top:395px;width:710px;height:1px;background:#000;"></div>
<div style="position:absolute;left:291px;top:395px;width:4px;height:1px;background:#000;"></div>
<div style="position:absolute;right:769.4px;text-align:right;top:389.84px;font-size:12px;line-height:12px;white-space:pre;letter-spacing:-0.4px;">0</div>
<div style="position:absolute;left:291px;top:344px;width:4px;height:1px;background:#000;"></div>
<div style="position:absolute;right:769.4px;text-align:right;top:338.84px;font-size:12px;line-height:12px;white-space:pre;letter-spacing:-0.4px;">20</div>
<div style="position:absolute;left:291px;top:293px;width:4px;height:1px;background:#000;"></div>
<div style="position:absolute;right:769.4px;text-align:right;top:287.84px;font-size:12px;line-height:12px;white-space:pre;letter-spacing:-0.4px;">40</div>
<div style="position:absolute;left:291px;top:242px;width:4px;height:1px;background:#000;"></div>
<div style="position:absolute;right:769.4px;text-align:right;top:236.84px;font-size:12px;line-height:12px;white-space:pre;letter-spacing:-0.4px;">60</div>
<div style="position:absolute;left:291px;top:191px;width:4px;height:1px;background:#000;"></div>
<div style="position:absolute;right:769.4px;text-align:right;top:185.84px;font-size:12px;line-height:12px;white-space:pre;letter-spacing:-0.4px;">80</div>
<div style="position:absolute;left:291px;top:140px;width:4px;height:1px;background:#000;"></div>
<div style="position:absolute;right:769.4px;text-align:right;top:134.84px;font-size:12px;line-height:12px;white-space:pre;letter-spacing:-0.4px;">100</div>
<div style="position:absolute;left:295px;top:395px;width:1px;height:4px;background:#000;"></div>
<div style="position:absolute;left:95px;width:400px;text-align:center;top:403.84px;font-size:12px;line-height:12px;white-space:pre;letter-spacing:-0.35px;">8:02:29 AM</div>
<div style="position:absolute;left:432px;top:395px;width:1px;height:4px;background:#000;"></div>
<div style="position:absolute;left:232px;width:400px;text-align:center;top:403.84px;font-size:12px;line-height:12px;white-space:pre;letter-spacing:-0.35px;">8:02:35 AM</div>
<div style="position:absolute;left:547px;top:395px;width:1px;height:4px;background:#000;"></div>
<div style="position:absolute;left:347px;width:400px;text-align:center;top:403.84px;font-size:12px;line-height:12px;white-space:pre;letter-spacing:-0.35px;">8:02:40 AM</div>
<div style="position:absolute;left:661px;top:395px;width:1px;height:4px;background:#000;"></div>
<div style="position:absolute;left:461px;width:400px;text-align:center;top:403.84px;font-size:12px;line-height:12px;white-space:pre;letter-spacing:-0.35px;">8:02:45 AM</div>
<div style="position:absolute;left:775px;top:395px;width:1px;height:4px;background:#000;"></div>
<div style="position:absolute;left:575px;width:400px;text-align:center;top:403.84px;font-size:12px;line-height:12px;white-space:pre;letter-spacing:-0.35px;">8:02:50 AM</div>
<div style="position:absolute;left:890px;top:395px;width:1px;height:4px;background:#000;"></div>
<div style="position:absolute;left:690px;width:400px;text-align:center;top:403.84px;font-size:12px;line-height:12px;white-space:pre;letter-spacing:-0.35px;">8:02:55 AM</div>
<div style="position:absolute;left:1004px;top:395px;width:1px;height:4px;background:#000;"></div>
<div style="position:absolute;left:804px;width:400px;text-align:center;top:403.84px;font-size:12px;line-height:12px;white-space:pre;letter-spacing:-0.35px;">8:03:01 AM</div>
<svg style="position:absolute;left:295px;top:135px;" width="711" height="262" viewBox="0 0 711 262"><polyline points="22.9,256.3 45.7,209.4 68.6,117.2 91.5,100.0 114.4,124.5 137.2,51.1 160.1,5.0 594.6,5.0 640.4,125.3 686.1,129.3 709.0,219.5" fill="none" stroke="#808000" stroke-width="2" shape-rendering="crispEdges"/><polyline points="22.9,17.8 45.7,57.0 68.6,153.3 91.5,172.6 114.4,147.3 137.2,215.4 160.1,259.5 594.6,259.5 640.4,152.2 663.3,153.4 686.1,147.4 709.0,54.3" fill="none" stroke="#00ffff" stroke-width="2" shape-rendering="crispEdges"/></svg>
<div style="position:absolute;left:258px;top:435px;width:783px;height:14px;background:#c6c6c6;border-top:2px solid #6d6d6d;"></div>
<div style="position:absolute;left:258px;top:449px;width:783px;height:1px;background:#fff;"></div>
<div style="position:absolute;left:258px;top:435px;width:15px;height:15px;background:#f0f0f0;border-top:1px solid #f8f8f8;border-left:1px solid #f8f8f8;border-right:1px solid #696969;border-bottom:1px solid #696969;box-shadow:inset 1px 1px 0 #fff, inset -1px -1px 0 #a0a0a0;"></div>
<svg style="position:absolute;left:263px;top:439px;" width="4" height="7" viewBox="0 0 4 7"><path d="M3.5 0.5 V6.5 L0.5 3.5z" fill="#000"/></svg>
<div style="position:absolute;left:1026px;top:435px;width:15px;height:15px;background:#f0f0f0;border-top:1px solid #f8f8f8;border-left:1px solid #f8f8f8;border-right:1px solid #696969;border-bottom:1px solid #696969;box-shadow:inset 1px 1px 0 #fff, inset -1px -1px 0 #a0a0a0;"></div>
<svg style="position:absolute;left:1033px;top:439px;" width="4" height="7" viewBox="0 0 4 7"><path d="M0.5 0.5 V6.5 L3.5 3.5z" fill="#000"/></svg>
<div style="position:absolute;left:281px;top:435px;width:9px;height:14px;background:#f0f0f0;border:1px solid #696969;border-top-color:#f8f8f8;border-left-color:#f8f8f8;box-shadow:inset 1px 1px 0 #fff, inset -1px -1px 0 #a8a8a8;"></div>
<div style="position:absolute;left:290px;top:435px;width:9px;height:14px;background:#f0f0f0;border:1px solid #696969;border-top-color:#f8f8f8;border-left-color:#f8f8f8;box-shadow:inset 1px 1px 0 #fff, inset -1px -1px 0 #a8a8a8;"></div>
<div style="position:absolute;left:299px;top:435px;width:9px;height:14px;background:#f0f0f0;border:1px solid #696969;border-top-color:#f8f8f8;border-left-color:#f8f8f8;box-shadow:inset 1px 1px 0 #fff, inset -1px -1px 0 #a8a8a8;"></div>
<div style="position:absolute;left:276px;top:464.34px;font-size:12px;line-height:12px;white-space:pre;letter-spacing:-0.1px;">Last</div>
<div style="position:absolute;left:300px;top:461px;width:98px;height:17px;background:#f0f0f0;border-top:1px solid #a0a0a0;border-left:1px solid #a0a0a0;border-bottom:1px solid #fff;border-right:1px solid #fff;"></div>
<div style="position:absolute;right:663.4px;text-align:right;top:464.34px;font-size:12px;line-height:12px;white-space:pre;letter-spacing:-0.6px;">7.000</div>
<div style="position:absolute;left:409px;top:464.34px;font-size:12px;line-height:12px;white-space:pre;letter-spacing:-0.1px;">Average</div>
<div style="position:absolute;left:455px;top:461px;width:98px;height:17px;background:#f0f0f0;border-top:1px solid #a0a0a0;border-left:1px solid #a0a0a0;border-bottom:1px solid #fff;border-right:1px solid #fff;"></div>
<div style="position:absolute;right:508.4px;text-align:right;top:464.34px;font-size:12px;line-height:12px;white-space:pre;letter-spacing:-0.6px;">59.765</div>
<div style="position:absolute;left:563px;top:464.34px;font-size:12px;line-height:12px;white-space:pre;letter-spacing:-0.1px;">Minimum</div>
<div style="position:absolute;left:620px;top:461px;width:97px;height:17px;background:#f0f0f0;border-top:1px solid #a0a0a0;border-left:1px solid #a0a0a0;border-bottom:1px solid #fff;border-right:1px solid #fff;"></div>
<div style="position:absolute;right:344.4px;text-align:right;top:464.34px;font-size:12px;line-height:12px;white-space:pre;letter-spacing:-0.6px;">0.000</div>
<div style="position:absolute;left:728px;top:464.34px;font-size:12px;line-height:12px;white-space:pre;letter-spacing:-0.1px;">Maximum</div>
<div style="position:absolute;left:786px;top:461px;width:97px;height:17px;background:#f0f0f0;border-top:1px solid #a0a0a0;border-left:1px solid #a0a0a0;border-bottom:1px solid #fff;border-right:1px solid #fff;"></div>
<div style="position:absolute;right:178.39999999999998px;text-align:right;top:464.34px;font-size:12px;line-height:12px;white-space:pre;letter-spacing:-0.6px;">821.199</div>
<div style="position:absolute;left:894.5px;top:464.34px;font-size:12px;line-height:12px;white-space:pre;letter-spacing:-0.1px;">Duration</div>
<div style="position:absolute;left:945px;top:461px;width:97px;height:17px;background:#f0f0f0;border-top:1px solid #a0a0a0;border-left:1px solid #a0a0a0;border-bottom:1px solid #fff;border-right:1px solid #fff;"></div>
<div style="position:absolute;right:19.40000000000009px;text-align:right;top:464.34px;font-size:12px;line-height:12px;white-space:pre;letter-spacing:-0.6px;">0:32</div>
<div style="position:absolute;left:258px;top:488px;width:784px;height:153px;background:#f0f0f0;border:1px solid #8c9096;border-bottom:none;"></div>
<div style="position:absolute;left:259px;top:489px;width:782px;height:1px;background:#fafafa;"></div>
<div style="position:absolute;left:260px;top:490px;width:763px;height:19px;background:#fcfcfc;border-bottom:1px solid #e6e6e6;"></div>
<div style="position:absolute;left:313px;top:491px;width:1px;height:17px;background:#e3e3e3;"></div>
<div style="position:absolute;left:266px;top:493.84px;font-size:12px;line-height:12px;white-space:pre;letter-spacing:-0.15px;">Show</div>
<div style="position:absolute;left:368px;top:491px;width:1px;height:17px;background:#e3e3e3;"></div>
<div style="position:absolute;left:320.5px;top:493.84px;font-size:12px;line-height:12px;white-space:pre;letter-spacing:-0.15px;">Color</div>
<div style="position:absolute;left:422px;top:491px;width:1px;height:17px;background:#e3e3e3;"></div>
<div style="position:absolute;left:374px;top:493.84px;font-size:12px;line-height:12px;white-space:pre;letter-spacing:-0.15px;">Scale</div>
<div style="position:absolute;left:558px;top:491px;width:1px;height:17px;background:#e3e3e3;"></div>
<div style="position:absolute;left:428px;top:493.84px;font-size:12px;line-height:12px;white-space:pre;letter-spacing:-0.15px;">Counter</div>
<div style="position:absolute;left:625px;top:491px;width:1px;height:17px;background:#e3e3e3;"></div>
<div style="position:absolute;left:563.5px;top:493.84px;font-size:12px;line-height:12px;white-space:pre;letter-spacing:-0.15px;">Instance</div>
<div style="position:absolute;left:694px;top:491px;width:1px;height:17px;background:#e3e3e3;"></div>
<div style="position:absolute;left:632.7px;top:493.84px;font-size:12px;line-height:12px;white-space:pre;letter-spacing:-0.15px;">Parent</div>
<div style="position:absolute;left:905px;top:491px;width:1px;height:17px;background:#e3e3e3;"></div>
<div style="position:absolute;left:700.2px;top:493.84px;font-size:12px;line-height:12px;white-space:pre;letter-spacing:-0.15px;">Object</div>
<div style="position:absolute;left:1013px;top:491px;width:1px;height:17px;background:#e3e3e3;"></div>
<div style="position:absolute;left:911.5px;top:493.84px;font-size:12px;line-height:12px;white-space:pre;letter-spacing:-0.15px;">Computer</div>
<div style="position:absolute;left:260px;top:508px;width:763px;height:131px;overflow:hidden;">
<div style="position:absolute;left:4px;top:1px;width:14px;height:14px;background:#fff;border-top:2px solid #757575;border-left:2px solid #757575;border-right:1px solid #e0e0e0;border-bottom:1px solid #e0e0e0;box-sizing:border-box;"></div>
<div style="position:absolute;left:371px;top:9px;width:3px;height:1px;background:#111;"></div>
<div style="position:absolute;left:376px;top:9px;width:3px;height:1px;background:#111;"></div>
<div style="position:absolute;left:381px;top:9px;width:3px;height:1px;background:#111;"></div>
<div style="position:absolute;left:58px;top:7.0px;width:47px;height:2px;background:#ffcc00;border-radius:1.0px;"></div>
<div style="position:absolute;left:112px;top:0.84px;font-size:12px;line-height:16px;white-space:pre;letter-spacing:-0.2px;">0.1</div>
<div style="position:absolute;left:167px;top:0.84px;font-size:12px;line-height:16px;white-space:pre;letter-spacing:-0.2px;">DPC Rate</div>
<div style="position:absolute;left:302px;top:0.84px;font-size:12px;line-height:16px;white-space:pre;letter-spacing:-0.2px;">_Total</div>
<div style="position:absolute;left:438px;top:0.84px;font-size:12px;line-height:16px;white-space:pre;letter-spacing:-0.35px;">Processor</div>
<div style="position:absolute;left:649.5px;top:0.84px;font-size:12px;line-height:16px;white-space:pre;letter-spacing:-0.35px;"><span style="letter-spacing:1.5px">\\</span>CZ225-MSCS-AD</div>
<div style="position:absolute;left:4px;top:16px;width:14px;height:14px;background:#fff;border-top:2px solid #757575;border-left:2px solid #757575;border-right:1px solid #e0e0e0;border-bottom:1px solid #e0e0e0;box-sizing:border-box;"></div>
<svg style="position:absolute;left:8px;top:19px" width="7" height="7"><g fill="#000" shape-rendering="crispEdges"><rect x="6" y="0" width="1" height="1"/><rect x="5" y="1" width="1" height="1"/><rect x="6" y="1" width="1" height="1"/><rect x="0" y="2" width="1" height="1"/><rect x="4" y="2" width="1" height="1"/><rect x="5" y="2" width="1" height="1"/><rect x="6" y="2" width="1" height="1"/><rect x="0" y="3" width="1" height="1"/><rect x="1" y="3" width="1" height="1"/><rect x="3" y="3" width="1" height="1"/><rect x="4" y="3" width="1" height="1"/><rect x="5" y="3" width="1" height="1"/><rect x="0" y="4" width="1" height="1"/><rect x="1" y="4" width="1" height="1"/><rect x="2" y="4" width="1" height="1"/><rect x="3" y="4" width="1" height="1"/><rect x="4" y="4" width="1" height="1"/><rect x="1" y="5" width="1" height="1"/><rect x="2" y="5" width="1" height="1"/><rect x="3" y="5" width="1" height="1"/><rect x="2" y="6" width="1" height="1"/></g></svg>
<div style="position:absolute;left:371px;top:24px;width:3px;height:1px;background:#111;"></div>
<div style="position:absolute;left:376px;top:24px;width:3px;height:1px;background:#111;"></div>
<div style="position:absolute;left:381px;top:24px;width:3px;height:1px;background:#111;"></div>
<div style="position:absolute;left:58px;top:22.0px;width:47px;height:2px;background:#00ffff;border-radius:1.0px;"></div>
<div style="position:absolute;left:112px;top:15.84px;font-size:12px;line-height:16px;white-space:pre;letter-spacing:-0.2px;">1.0</div>
<div style="position:absolute;left:167px;top:15.84px;font-size:12px;line-height:16px;white-space:pre;letter-spacing:-0.2px;">% Idle Time</div>
<div style="position:absolute;left:302px;top:15.84px;font-size:12px;line-height:16px;white-space:pre;letter-spacing:-0.2px;">_Total</div>
<div style="position:absolute;left:438px;top:15.84px;font-size:12px;line-height:16px;white-space:pre;letter-spacing:-0.35px;">Processor</div>
<div style="position:absolute;left:649.5px;top:15.84px;font-size:12px;line-height:16px;white-space:pre;letter-spacing:-0.35px;"><span style="letter-spacing:1.5px">\\</span>CZ225-MSCS-AD</div>
<div style="position:absolute;left:4px;top:31px;width:14px;height:14px;background:#fff;border-top:2px solid #757575;border-left:2px solid #757575;border-right:1px solid #e0e0e0;border-bottom:1px solid #e0e0e0;box-sizing:border-box;"></div>
<div style="position:absolute;left:371px;top:39px;width:3px;height:1px;background:#111;"></div>
<div style="position:absolute;left:376px;top:39px;width:3px;height:1px;background:#111;"></div>
<div style="position:absolute;left:381px;top:39px;width:3px;height:1px;background:#111;"></div>
<div style="position:absolute;left:58px;top:37.0px;width:47px;height:2px;background:#000080;border-radius:1.0px;"></div>
<div style="position:absolute;left:112px;top:30.84px;font-size:12px;line-height:16px;white-space:pre;letter-spacing:-0.2px;">1.0</div>
<div style="position:absolute;left:167px;top:30.84px;font-size:12px;line-height:16px;white-space:pre;letter-spacing:-0.2px;">% C3 Time</div>
<div style="position:absolute;left:302px;top:30.84px;font-size:12px;line-height:16px;white-space:pre;letter-spacing:-0.2px;">_Total</div>
<div style="position:absolute;left:438px;top:30.84px;font-size:12px;line-height:16px;white-space:pre;letter-spacing:-0.35px;">Processor</div>
<div style="position:absolute;left:649.5px;top:30.84px;font-size:12px;line-height:16px;white-space:pre;letter-spacing:-0.35px;"><span style="letter-spacing:1.5px">\\</span>CZ225-MSCS-AD</div>
<div style="position:absolute;left:4px;top:46px;width:14px;height:14px;background:#fff;border-top:2px solid #757575;border-left:2px solid #757575;border-right:1px solid #e0e0e0;border-bottom:1px solid #e0e0e0;box-sizing:border-box;"></div>
<div style="position:absolute;left:371px;top:54px;width:3px;height:1px;background:#111;"></div>
<div style="position:absolute;left:376px;top:54px;width:3px;height:1px;background:#111;"></div>
<div style="position:absolute;left:381px;top:54px;width:3px;height:1px;background:#111;"></div>
<div style="position:absolute;left:58px;top:52.0px;width:47px;height:2px;background:#f8dcb0;border-radius:1.0px;"></div>
<div style="position:absolute;left:112px;top:45.84px;font-size:12px;line-height:16px;white-space:pre;letter-spacing:-0.2px;">10.0</div>
<div style="position:absolute;left:167px;top:45.84px;font-size:12px;line-height:16px;white-space:pre;letter-spacing:-0.2px;">% Interrupt Time</div>
<div style="position:absolute;left:302px;top:45.84px;font-size:12px;line-height:16px;white-space:pre;letter-spacing:-0.2px;">_Total</div>
<div style="position:absolute;left:438px;top:45.84px;font-size:12px;line-height:16px;white-space:pre;letter-spacing:-0.35px;">Processor</div>
<div style="position:absolute;left:649.5px;top:45.84px;font-size:12px;line-height:16px;white-space:pre;letter-spacing:-0.35px;"><span style="letter-spacing:1.5px">\\</span>CZ225-MSCS-AD</div>
<div style="position:absolute;left:4px;top:61px;width:14px;height:14px;background:#fff;border-top:2px solid #757575;border-left:2px solid #757575;border-right:1px solid #e0e0e0;border-bottom:1px solid #e0e0e0;box-sizing:border-box;"></div>
<div style="position:absolute;left:371px;top:69px;width:3px;height:1px;background:#111;"></div>
<div style="position:absolute;left:376px;top:69px;width:3px;height:1px;background:#111;"></div>
<div style="position:absolute;left:381px;top:69px;width:3px;height:1px;background:#111;"></div>
<div style="position:absolute;left:58px;top:67.0px;width:47px;height:2px;background:#008000;border-radius:1.0px;"></div>
<div style="position:absolute;left:112px;top:60.84px;font-size:12px;line-height:16px;white-space:pre;letter-spacing:-0.2px;">1.0</div>
<div style="position:absolute;left:167px;top:60.84px;font-size:12px;line-height:16px;white-space:pre;letter-spacing:-0.2px;">% C2 Time</div>
<div style="position:absolute;left:302px;top:60.84px;font-size:12px;line-height:16px;white-space:pre;letter-spacing:-0.2px;">_Total</div>
<div style="position:absolute;left:438px;top:60.84px;font-size:12px;line-height:16px;white-space:pre;letter-spacing:-0.35px;">Processor</div>
<div style="position:absolute;left:649.5px;top:60.84px;font-size:12px;line-height:16px;white-space:pre;letter-spacing:-0.35px;"><span style="letter-spacing:1.5px">\\</span>CZ225-MSCS-AD</div>
<div style="position:absolute;left:4px;top:76px;width:14px;height:14px;background:#fff;border-top:2px solid #757575;border-left:2px solid #757575;border-right:1px solid #e0e0e0;border-bottom:1px solid #e0e0e0;box-sizing:border-box;"></div>
<div style="position:absolute;left:371px;top:84px;width:3px;height:1px;background:#111;"></div>
<div style="position:absolute;left:376px;top:84px;width:3px;height:1px;background:#111;"></div>
<div style="position:absolute;left:381px;top:84px;width:3px;height:1px;background:#111;"></div>
<div style="position:absolute;left:58px;top:82.0px;width:47px;height:2px;background:#66ccaa;border-radius:1.0px;"></div>
<div style="position:absolute;left:112px;top:75.84px;font-size:12px;line-height:16px;white-space:pre;letter-spacing:-0.2px;">0.1</div>
<div style="position:absolute;left:167px;top:75.84px;font-size:12px;line-height:16px;white-space:pre;letter-spacing:-0.2px;">% User Time</div>
<div style="position:absolute;left:302px;top:75.84px;font-size:12px;line-height:16px;white-space:pre;letter-spacing:-0.2px;">_Total</div>
<div style="position:absolute;left:438px;top:75.84px;font-size:12px;line-height:16px;white-space:pre;letter-spacing:-0.35px;">Processor</div>
<div style="position:absolute;left:649.5px;top:75.84px;font-size:12px;line-height:16px;white-space:pre;letter-spacing:-0.35px;"><span style="letter-spacing:1.5px">\\</span>CZ225-MSCS-AD</div>
<div style="position:absolute;left:4px;top:91px;width:14px;height:14px;background:#fff;border-top:2px solid #757575;border-left:2px solid #757575;border-right:1px solid #e0e0e0;border-bottom:1px solid #e0e0e0;box-sizing:border-box;"></div>
<div style="position:absolute;left:371px;top:99px;width:3px;height:1px;background:#111;"></div>
<div style="position:absolute;left:376px;top:99px;width:3px;height:1px;background:#111;"></div>
<div style="position:absolute;left:381px;top:99px;width:3px;height:1px;background:#111;"></div>
<div style="position:absolute;left:58px;top:97.0px;width:47px;height:2px;background:#b8860b;border-radius:1.0px;"></div>
<div style="position:absolute;left:112px;top:90.84px;font-size:12px;line-height:16px;white-space:pre;letter-spacing:-0.2px;">1.0</div>
<div style="position:absolute;left:167px;top:90.84px;font-size:12px;line-height:16px;white-space:pre;letter-spacing:-0.2px;">% C1 Time</div>
<div style="position:absolute;left:302px;top:90.84px;font-size:12px;line-height:16px;white-space:pre;letter-spacing:-0.2px;">_Total</div>
<div style="position:absolute;left:438px;top:90.84px;font-size:12px;line-height:16px;white-space:pre;letter-spacing:-0.35px;">Processor</div>
<div style="position:absolute;left:649.5px;top:90.84px;font-size:12px;line-height:16px;white-space:pre;letter-spacing:-0.35px;"><span style="letter-spacing:1.5px">\\</span>CZ225-MSCS-AD</div>
<div style="position:absolute;left:4px;top:106px;width:14px;height:14px;background:#fff;border-top:2px solid #757575;border-left:2px solid #757575;border-right:1px solid #e0e0e0;border-bottom:1px solid #e0e0e0;box-sizing:border-box;"></div>
<svg style="position:absolute;left:8px;top:109px" width="7" height="7"><g fill="#000" shape-rendering="crispEdges"><rect x="6" y="0" width="1" height="1"/><rect x="5" y="1" width="1" height="1"/><rect x="6" y="1" width="1" height="1"/><rect x="0" y="2" width="1" height="1"/><rect x="4" y="2" width="1" height="1"/><rect x="5" y="2" width="1" height="1"/><rect x="6" y="2" width="1" height="1"/><rect x="0" y="3" width="1" height="1"/><rect x="1" y="3" width="1" height="1"/><rect x="3" y="3" width="1" height="1"/><rect x="4" y="3" width="1" height="1"/><rect x="5" y="3" width="1" height="1"/><rect x="0" y="4" width="1" height="1"/><rect x="1" y="4" width="1" height="1"/><rect x="2" y="4" width="1" height="1"/><rect x="3" y="4" width="1" height="1"/><rect x="4" y="4" width="1" height="1"/><rect x="1" y="5" width="1" height="1"/><rect x="2" y="5" width="1" height="1"/><rect x="3" y="5" width="1" height="1"/><rect x="2" y="6" width="1" height="1"/></g></svg>
<div style="position:absolute;left:371px;top:114px;width:3px;height:1px;background:#111;"></div>
<div style="position:absolute;left:376px;top:114px;width:3px;height:1px;background:#111;"></div>
<div style="position:absolute;left:381px;top:114px;width:3px;height:1px;background:#111;"></div>
<div style="position:absolute;left:58px;top:112.0px;width:47px;height:2px;background:#808000;border-radius:1.0px;"></div>
<div style="position:absolute;left:112px;top:105.84px;font-size:12px;line-height:16px;white-space:pre;letter-spacing:-0.2px;">1.0</div>
<div style="position:absolute;left:167px;top:105.84px;font-size:12px;line-height:16px;white-space:pre;letter-spacing:-0.2px;">% Processor Time</div>
<div style="position:absolute;left:302px;top:105.84px;font-size:12px;line-height:16px;white-space:pre;letter-spacing:-0.2px;">_Total</div>
<div style="position:absolute;left:438px;top:105.84px;font-size:12px;line-height:16px;white-space:pre;letter-spacing:-0.35px;">Processor</div>
<div style="position:absolute;left:649.5px;top:105.84px;font-size:12px;line-height:16px;white-space:pre;letter-spacing:-0.35px;"><span style="letter-spacing:1.5px">\\</span>CZ225-MSCS-AD</div>
<div style="position:absolute;left:4px;top:121px;width:14px;height:14px;background:#fff;border-top:2px solid #757575;border-left:2px solid #757575;border-right:1px solid #e0e0e0;border-bottom:1px solid #e0e0e0;box-sizing:border-box;"></div>
<div style="position:absolute;left:371px;top:129px;width:3px;height:1px;background:#111;"></div>
<div style="position:absolute;left:376px;top:129px;width:3px;height:1px;background:#111;"></div>
<div style="position:absolute;left:381px;top:129px;width:3px;height:1px;background:#111;"></div>
<div style="position:absolute;left:58px;top:126.5px;width:47px;height:3px;background:#ff0000;border-radius:1.5px;"></div>
<div style="position:absolute;left:112px;top:120.84px;font-size:12px;line-height:16px;white-space:pre;letter-spacing:-0.2px;">0.01</div>
<div style="position:absolute;left:167px;top:120.84px;font-size:12px;line-height:16px;white-space:pre;letter-spacing:-0.2px;">C1 Transitions/sec</div>
<div style="position:absolute;left:302px;top:120.84px;font-size:12px;line-height:16px;white-space:pre;letter-spacing:-0.2px;">_Total</div>
<div style="position:absolute;left:438px;top:120.84px;font-size:12px;line-height:16px;white-space:pre;letter-spacing:-0.35px;">Processor</div>
<div style="position:absolute;left:649.5px;top:120.84px;font-size:12px;line-height:16px;white-space:pre;letter-spacing:-0.35px;"><span style="letter-spacing:1.5px">\\</span>CZ225-MSCS-AD</div>
</div>
<div style="position:absolute;left:1023px;top:490px;width:17px;height:149px;background:#fff;border-left:1px solid #d6d6d6;"></div>
<div style="position:absolute;left:1024px;top:490px;width:16px;height:17px;background:#fff;border:1px solid #c8c8c8;"></div>
<svg style="position:absolute;left:1027px;top:495px;" width="9" height="6" viewBox="0 0 9 6"><path d="M0.5 5 L4.5 1 L8.5 5" fill="none" stroke="#555" stroke-width="1.3"/></svg>
<div style="position:absolute;left:1024px;top:588px;width:16px;height:17px;background:#dcdcdc;border:1px solid #a8a8a8;"></div>
<div style="position:absolute;left:1024px;top:630px;width:16px;height:10px;background:#fff;border:1px solid #c8c8c8;border-bottom:none;"></div>
<svg style="position:absolute;left:1027px;top:635px;" width="9" height="5" viewBox="0 0 9 5"><path d="M0.5 0.5 L4.5 4.5 L8.5 0.5" fill="none" stroke="#555" stroke-width="1.3"/></svg>
<div style="position:absolute;left:9px;top:640px;width:1040px;height:1px;background:#8c9096;"></div>
<div style="position:absolute;left:9px;top:641px;width:1040px;height:1px;background:#7a7e84;"></div>
<div style="position:absolute;left:9px;top:642px;width:1040px;height:22px;background:#fff;border-left:1px solid #a0a0a0;border-bottom:1px solid #a8a8a8;"></div>
<div style="position:absolute;left:1046px;top:643px;width:1px;height:20px;background:#d8d8d8;"></div>
</body></html>
